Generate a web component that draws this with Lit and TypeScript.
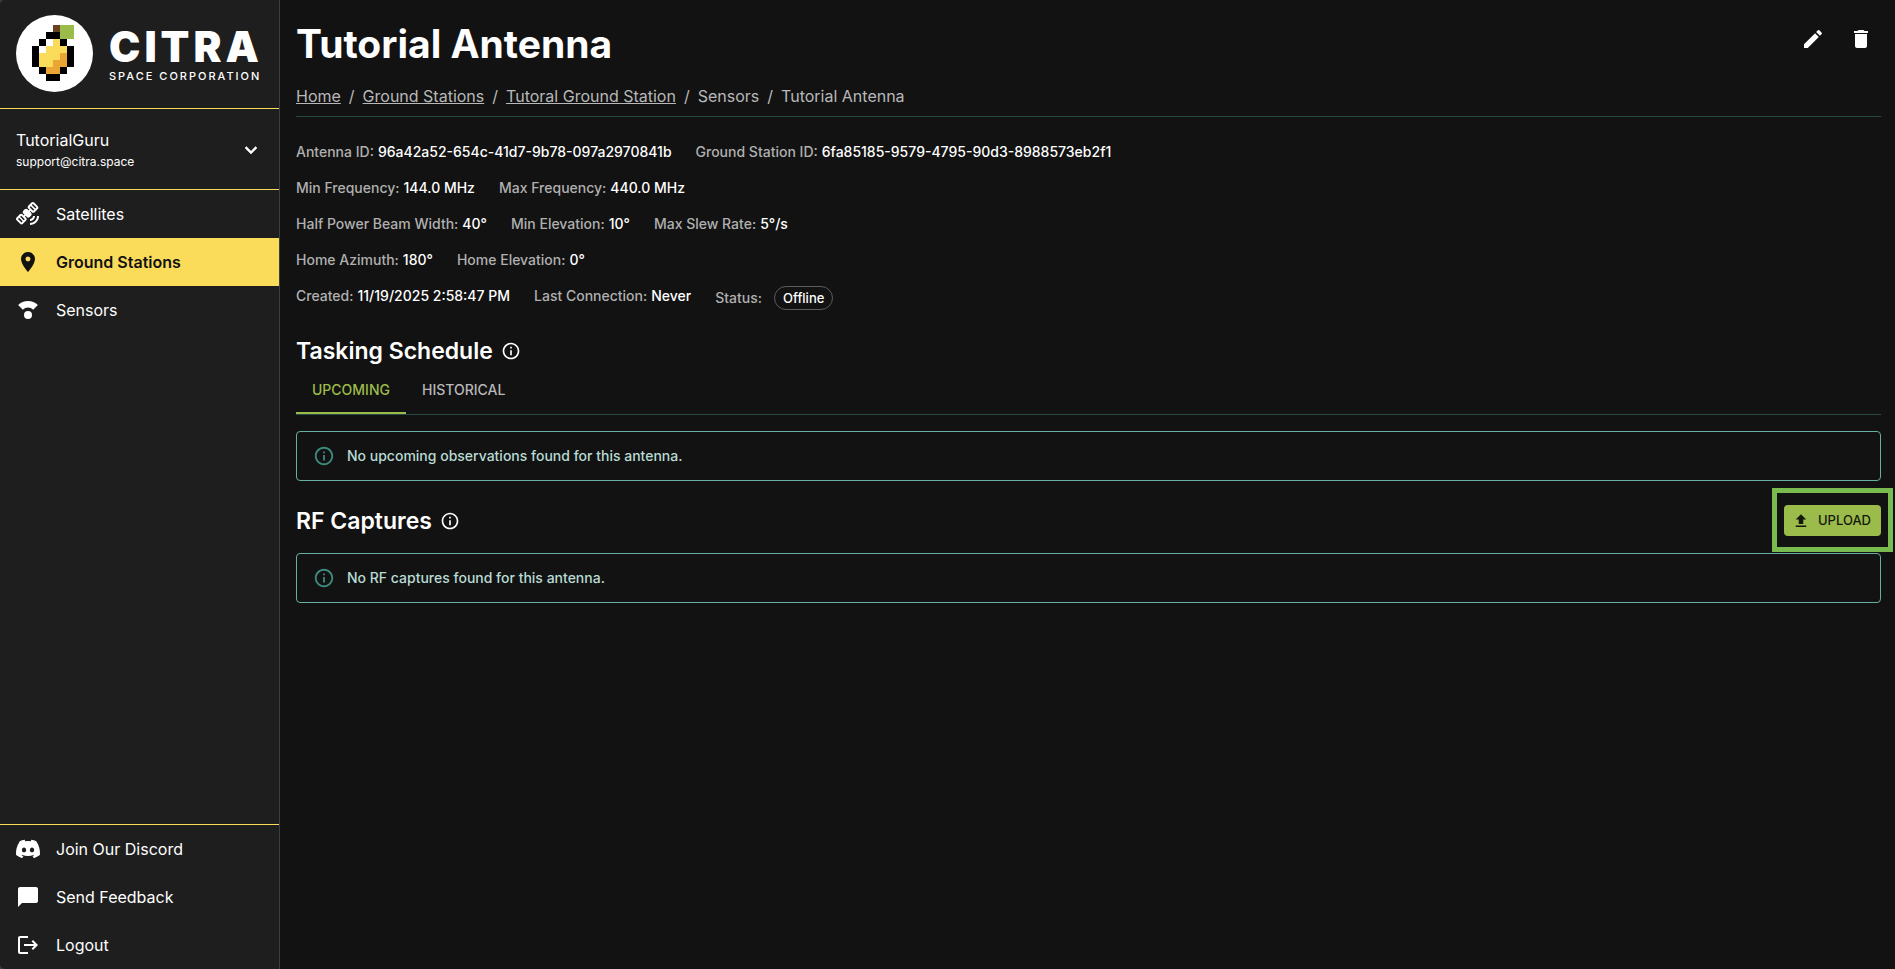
import { LitElement, html, css, svg } from "lit";
import { customElement, property, state } from "lit/decorators.js";
import { classMap } from "lit/directives/class-map.js";

const icons: Record<string, unknown> = {
  satellite: svg`<path fill-rule="evenodd" d="M21 14h2c0 4.970-4.030 9-9 9v-2c3.870 0 7-3.130 7-7zm-7 3v2c2.760 0 5-2.240 5-5h-2c0 1.660-1.340 3-3 3zM18.260.590l3.540 3.540c.780.780.780 2.050 0 2.830l-3.180 3.180c-.780.780-2.050.780-2.830 0l-1.240-1.240-.710.700 1.240 1.240c.780.780.780 2.050 0 2.830l-1.410 1.410c-.780.780-2.050.780-2.830 0l-1.240-1.240-.710.710 1.240 1.240c.780.780.780 2.050 0 2.830l-3.180 3.180c-.780.780-2.050.780-2.830 0L.580 18.260c-.780-.780-.780-2.050 0-2.830l3.180-3.180c.780-.780 2.050-.780 2.830 0l1.240 1.240.710-.710-1.240-1.230c-.780-.780-.780-2.050 0-2.830l1.410-1.410c.780-.780 2.050-.780 2.830 0l1.240 1.240.710-.710-1.240-1.240c-.780-.780-.780-2.050 0-2.830L15.430.590c.790-.790 2.050-.790 2.830 0zM16.900 2l-1.060 1.060 3.540 3.540 1.060-1.060zM14.770 4.130l-1.060 1.060 3.540 3.540 1.060-1.060zM5.210 13.690l-1.060 1.060 3.540 3.540 1.060-1.060zM3.080 15.820l-1.060 1.060 3.540 3.540 1.060-1.060z"/>`,
  pin: svg`<path d="M12 2C8.130 2 5 5.130 5 9c0 5.250 7 13 7 13s7-7.750 7-13c0-3.870-3.130-7-7-7zm0 9.500a2.500 2.500 0 0 1 0-5 2.500 2.500 0 0 1 0 5z"/>`,
  sensor: svg`<path d="M12 3C8.200 3 4.700 4.500 2.100 7l4.700 4.700a7.500 7.500 0 0 1 10.400 0L21.900 7A14.200 14.200 0 0 0 12 3z"/><circle cx="12" cy="17" r="4"/>`,
  discord: svg`<path d="M20.317 4.370a19.800 19.800 0 0 0-4.885-1.515.074.074 0 0 0-.079.037c-.210.375-.444.864-.608 1.250a18.270 18.270 0 0 0-5.487 0 12.640 12.640 0 0 0-.617-1.250.077.077 0 0 0-.079-.037A19.740 19.740 0 0 0 3.677 4.370a.070.070 0 0 0-.032.027C.533 9.046-.320 13.580.099 18.058a.082.082 0 0 0 .031.057 19.900 19.900 0 0 0 5.993 3.030.078.078 0 0 0 .084-.028c.462-.630.874-1.295 1.226-1.994a.076.076 0 0 0-.041-.106 13.107 13.107 0 0 1-1.872-.892.077.077 0 0 1-.008-.128c.126-.094.252-.192.372-.291a.074.074 0 0 1 .077-.010c3.928 1.793 8.180 1.793 12.062 0a.074.074 0 0 1 .078.009c.120.099.246.198.373.292a.077.077 0 0 1-.006.127 12.299 12.299 0 0 1-1.873.892.077.077 0 0 0-.041.107c.360.698.772 1.362 1.225 1.993a.076.076 0 0 0 .084.028 19.839 19.839 0 0 0 6.002-3.030.077.077 0 0 0 .032-.054c.500-5.177-.838-9.674-3.549-13.660a.061.061 0 0 0-.031-.029zM8.020 15.330c-1.183 0-2.157-1.085-2.157-2.419s.955-2.419 2.157-2.419c1.210 0 2.176 1.095 2.157 2.420 0 1.333-.956 2.418-2.157 2.418zm7.975 0c-1.183 0-2.157-1.085-2.157-2.419s.955-2.419 2.157-2.419c1.210 0 2.176 1.095 2.157 2.420 0 1.333-.946 2.418-2.157 2.418z"/>`,
  chat: svg`<path d="M20 2H4c-1.100 0-2 .9-2 2v18l4-4h14c1.100 0 2-.9 2-2V4c0-1.100-.9-2-2-2z"/>`,
  logout: svg`<path d="m17 7-1.410 1.410L18.170 11H8v2h10.170l-2.580 2.580L17 17l5-5zM4 5h8V3H4c-1.100 0-2 .9-2 2v14c0 1.100.9 2 2 2h8v-2H4z"/>`,
  edit: svg`<path d="M3 17.250V21h3.750L17.810 9.940l-3.750-3.750zM20.710 7.040c.390-.390.390-1.020 0-1.410l-2.340-2.340a.9959.9959 0 0 0-1.410 0l-1.830 1.830 3.750 3.750z"/>`,
  trash: svg`<path d="M6 19c0 1.100.9 2 2 2h8c1.100 0 2-.9 2-2V7H6zM19 4h-3.500l-1-1h-5l-1 1H5v2h14z"/>`,
  info: svg`<path d="M11 7h2v2h-2zm0 4h2v6h-2zm1-9C6.480 2 2 6.480 2 12s4.480 10 10 10 10-4.480 10-10S17.520 2 12 2m0 18c-4.410 0-8-3.590-8-8s3.590-8 8-8 8 3.590 8 8-3.590 8-8 8"/>`,
  upload: svg`<path d="M5 20h14v-2H5zm0-10h4v6h6v-6h4l-7-7z"/>`,
  chevron: svg`<path d="M7.410 8.590 12 13.170l4.590-4.580L18 10l-6 6-6-6z" stroke="currentColor" stroke-width=".5"/>`,
};

@customElement("ui-icon")
export class UiIcon extends LitElement {
  @property() name = "";
  static styles = css`
    :host { display: inline-flex; width: 24px; height: 24px; flex: none; }
    svg { width: 100%; height: 100%; fill: currentColor; overflow: visible; }
  `;
  render() {
    return html`<svg viewBox="0 0 24 24" aria-hidden="true">${icons[this.name]}</svg>`;
  }
}

const K = "#000", W = "#fff", Y = "#fadb5a", O = "#eba534", G = "#9bbb4b", B = "#6b4220";
const lemon: (string | null)[][] = [
  [null, null, null, B, G, G],
  [null, null, K, K, G, G],
  [null, K, W, Y, K, null],
  [K, W, Y, Y, Y, K],
  [K, Y, Y, Y, O, K],
  [K, Y, Y, O, O, K],
  [null, K, O, O, K, null],
  [null, null, K, K, null, null],
];

@customElement("citra-logo")
export class CitraLogo extends LitElement {
  static styles = css`
    :host { display: flex; align-items: center; gap: 16px; padding: 15px 16px 16px; color: #fff; }
    .mark { width: 77px; height: 77px; flex: none; }
    .words { display: flex; flex-direction: column; }
    .name { font: 900 42px/44px Inter, sans-serif; letter-spacing: 4px; }
    .sub { font: 500 11px/14px Inter, sans-serif; letter-spacing: 2px; white-space: nowrap; }
  `;
  render() {
    return html`
      <svg class="mark" viewBox="0 0 77 77" aria-hidden="true">
        <circle cx="38.500" cy="38.500" r="38.500" fill="#fff" />
        ${lemon.map((row, y) =>
          row.map((c, x) => (c ? svg`<rect x=${16 + x * 7} y=${10 + y * 7} width="7" height="7" fill=${c} shape-rendering="crispEdges" />` : null)),
        )}
      </svg>
      <div class="words"><span class="name">CITRA</span><span class="sub">SPACE CORPORATION</span></div>
    `;
  }
}

@customElement("app-alert")
export class AppAlert extends LitElement {
  static styles = css`
    :host { display: flex; align-items: center; gap: 12px; padding: 13px 16px; border: 1px solid #67aea3; border-radius: 4px; color: #b9dbd4; font-size: 14px; line-height: 22px; font-weight: 500; }
    ui-icon { width: 22px; height: 22px; color: #3f8a7f; }
  `;
  render() {
    return html`<ui-icon name="info"></ui-icon><span><slot></slot></span>`;
  }
}

const details: [string, string][][] = [
  [["Antenna ID", "96a42a52-654c-41d7-9b78-097a2970841b"], ["Ground Station ID", "6fa85185-9579-4795-90d3-8988573eb2f1"]],
  [["Min Frequency", "144.0 MHz"], ["Max Frequency", "440.0 MHz"]],
  [["Half Power Beam Width", "40°"], ["Min Elevation", "10°"], ["Max Slew Rate", "5°/s"]],
  [["Home Azimuth", "180°"], ["Home Elevation", "0°"]],
  [["Created", "11/19/2025 2:58:47 PM"], ["Last Connection", "Never"]],
];

@customElement("app-root")
export class AppRoot extends LitElement {
  @state() private tab = "Upcoming";

  static styles = css`
    :host { display: flex; min-height: 100vh; background: #3a3a3a; color: #fff; font-family: Inter, "Noto Sans", sans-serif; font-size: 16px; line-height: 24px; }
    * { box-sizing: border-box; }
    a { color: inherit; }
    button { font: inherit; color: inherit; background: none; border: 0; padding: 0; margin: 0; cursor: pointer; }
    .sidebar { width: 280px; flex: none; display: flex; flex-direction: column; background: #1e1e1e; border-right: 1px solid #36413f; border-radius: 5px 0 0 5px; }
    citra-logo { border-bottom: 1px solid #fadb5a; }
    .account { display: flex; align-items: center; justify-content: space-between; padding: 19px 16px 17px; border-bottom: 1px solid #fadb5a; text-align: left; }
    .user { display: flex; flex-direction: column; }
    .mail { font-size: 12px; line-height: 20px; }
    .link { display: flex; align-items: center; gap: 16px; height: 48px; padding: 0 16px; text-decoration: none; }
    .link.active { background: #fadb5a; color: #121212; font-weight: 600; }
    .bottom { margin-top: auto; border-top: 1px solid #fadb5a; }
    main { flex: 1; min-width: 0; background: #121212; padding: 16px 14px 16px 16px; }
    .top { display: flex; justify-content: space-between; align-items: flex-start; }
    h1 { margin: 0; font-size: 39px; line-height: 56px; font-weight: 700; }
    .actions { display: flex; gap: 8px; padding-top: 3px; }
    .actions button { padding: 8px; height: 40px; }
    .crumbs { display: flex; list-style: none; margin: 0; padding: 12px 0 8px; color: #b8b8b8; border-bottom: 1px solid #264b45; }
    .crumbs li + li::before { content: "/"; margin: 0 8px; }
    .details { display: flex; flex-direction: column; gap: 16px; margin: 25px 0 0; font-size: 14px; line-height: 20px; font-weight: 500; }
    .row { display: flex; gap: 24px; margin: 0; }
    .pair { display: flex; gap: 4px; }
    dt { color: #b0b0b0; }
    dd { margin: 0; }
    .status { gap: 12px; align-items: center; }
    .chip { display: block; border: 1px solid #5c5c5c; border-radius: 12px; padding: 0 8px; font-size: 13px; line-height: 22px; }
    h2 { display: flex; align-items: center; gap: 8px; margin: 0; font-size: 23px; line-height: 30px; font-weight: 600; }
    h2 ui-icon { width: 20px; height: 20px; }
    .tasking { margin-top: 26px; }
    .tabs { display: flex; border-bottom: 1px solid #264b45; margin-bottom: 16px; }
    .tab { height: 48px; padding: 2px 16px 0; font-size: 14px; line-height: 20px; font-weight: 500; text-transform: uppercase; color: #b8b8b8; border-bottom: 2px solid transparent; }
    .tab.on { color: #9bbb4b; border-color: #9bbb4b; }
    .captures { display: flex; justify-content: space-between; align-items: flex-end; margin: 24px 0 17px; }
    .upload { position: relative; display: flex; align-items: center; gap: 8px; padding: 4px 10px 4px 8px; background: #9bbb4b; color: #14180a; border-radius: 4px; font-size: 13px; line-height: 23px; font-weight: 500; }
    .upload ui-icon { width: 18px; height: 18px; }
    .upload::after { content: ""; position: absolute; inset: -17px -12px -16px -12px; border: 5px solid #79bb4f; pointer-events: none; }
  `;

  private link(icon: string, label: string, active = false) {
    return html`<a class=${classMap({ link: true, active })} href="#"><ui-icon name=${icon}></ui-icon>${label}</a>`;
  }

  render() {
    return html`
      <aside class="sidebar">
        <citra-logo></citra-logo>
        <button class="account">
          <span class="user"><span>TutorialGuru</span><span class="mail">support@citra.space</span></span>
          <ui-icon name="chevron"></ui-icon>
        </button>
        <nav>${this.link("satellite", "Satellites")}${this.link("pin", "Ground Stations", true)}${this.link("sensor", "Sensors")}</nav>
        <nav class="bottom">${this.link("discord", "Join Our Discord")}${this.link("chat", "Send Feedback")}${this.link("logout", "Logout")}</nav>
      </aside>
      <main>
        <header class="top">
          <h1>Tutorial Antenna</h1>
          <div class="actions">
            <button aria-label="Edit"><ui-icon name="edit"></ui-icon></button>
            <button aria-label="Delete"><ui-icon name="trash"></ui-icon></button>
          </div>
        </header>
        <ol class="crumbs">
          <li><a href="#">Home</a></li><li><a href="#">Ground Stations</a></li><li><a href="#">Tutoral Ground Station</a></li><li>Sensors</li><li>Tutorial Antenna</li>
        </ol>
        <section class="details">
          ${details.map(
            (row, i) => html`<dl class="row">
              ${row.map(([k, v]) => html`<div class="pair"><dt>${k}:</dt><dd>${v}</dd></div>`)}
              ${i === details.length - 1 ? html`<div class="pair status"><dt>Status:</dt><dd class="chip">Offline</dd></div>` : null}
            </dl>`,
          )}
        </section>
        <h2 class="tasking">Tasking Schedule <ui-icon name="info"></ui-icon></h2>
        <div class="tabs" role="tablist">
          ${["Upcoming", "Historical"].map(
            (t) => html`<button role="tab" aria-selected=${this.tab === t} class=${classMap({ tab: true, on: this.tab === t })} @click=${() => (this.tab = t)}>${t}</button>`,
          )}
        </div>
        <app-alert>No ${this.tab.toLowerCase()} observations found for this antenna.</app-alert>
        <div class="captures">
          <h2>RF Captures <ui-icon name="info"></ui-icon></h2>
          <button class="upload"><ui-icon name="upload"></ui-icon>UPLOAD</button>
        </div>
        <app-alert>No RF captures found for this antenna.</app-alert>
      </main>
    `;
  }
}
